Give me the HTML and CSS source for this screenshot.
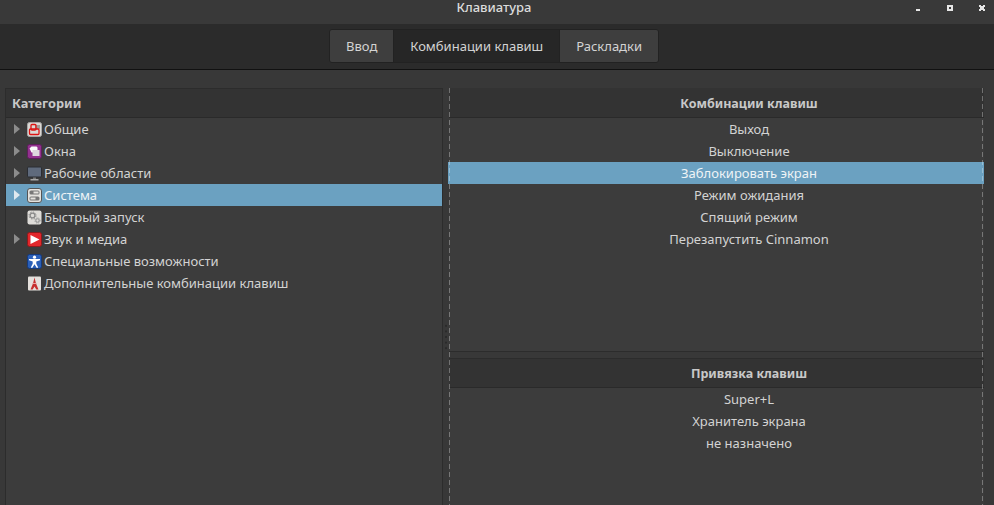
FILE: index.html
```html
<!DOCTYPE html>
<html lang="en">
<head>
    <meta charset="UTF-8">
    <meta name="viewport" content="width=device-width, initial-scale=1.0">
    <title>Клавиатура</title>
    <link rel="stylesheet" href="styles.css">
</head>
<body>
    <div class="titlebar">
        <span class="title">Клавиатура</span>
        <div class="window-buttons">
            <svg width="6" height="6" viewBox="0 0 6 6"><rect x="1" y="4" width="4" height="2" fill="#e6e6e6"/></svg>
            <svg width="6" height="6" viewBox="0 0 6 6"><path fill="#e6e6e6" fill-rule="evenodd" d="M0 0h6v6H0zM2 2v2h2V2z"/></svg>
            <svg width="6" height="6" viewBox="0 0 6 6"><path fill="#e6e6e6" d="M0 0h2v1h2V0h2v2H5v2h1v2H4V5H2v1H0V4h1V2H0z"/></svg>
        </div>
    </div>

    <div class="toolbar">
        <div class="tabs">
            <div class="tab">Ввод</div>
            <div class="tab active">Комбинации клавиш</div>
            <div class="tab">Раскладки</div>
        </div>
    </div>

    <div class="content">
        <div class="panel left-panel">
            <div class="panel-header left">Категории</div>
            <div class="rows">
                <div class="row"><span class="arrow"></span>
                    <svg class="icon" viewBox="0 0 15 15"><rect x=".5" y=".5" width="14" height="14" rx="2" fill="#dbd8d4" stroke="#a8a8a8"/><rect x="8" y="3" width="5" height="4" fill="#a09c98"/><rect x="4" y="2.500" width="5" height="5.500" rx="1" fill="none" stroke="#dc1414" stroke-width="1.300"/><rect x="2.500" y="7" width="9.500" height="5.500" rx="1" fill="none" stroke="#dc1414" stroke-width="1.300"/></svg>
                    Общие</div>
                <div class="row"><span class="arrow"></span>
                    <svg class="icon" viewBox="0 0 15 15"><rect x=".5" y=".5" width="14" height="14" rx="2" fill="#93318f" stroke="#5e1f5c"/><path d="M2.500 4.500l2-2h5l1 1v5h-6z" fill="#fafafa"/><rect x="5.500" y="6" width="7" height="6" fill="#ded8de"/></svg>
                    Окна</div>
                <div class="row"><span class="arrow"></span>
                    <svg class="icon" viewBox="0 0 15 15"><rect x=".5" y="1" width="14" height="10" rx="1" fill="#5f6a7c" stroke="#2a2d33"/><rect x="6" y="11.500" width="3" height="1.500" fill="#777"/><rect x="3.500" y="13" width="8" height="1.500" fill="#a8a8a8"/></svg>
                    Рабочие области</div>
                <div class="row selected"><span class="arrow"></span>
                    <svg class="icon" viewBox="0 0 15 15"><rect x=".5" y=".5" width="14" height="14" rx="2.500" fill="#e4e2de" stroke="#555"/><rect x="2.500" y="2.500" width="10" height="4" rx="1.500" fill="#777"/><rect x="6.500" y="3.500" width="5" height="2" fill="#e4e2de"/><rect x="2.500" y="8.500" width="10" height="4" rx="1.500" fill="#777"/><rect x="3.500" y="9.500" width="5" height="2" fill="#e4e2de"/></svg>
                    Система</div>
                <div class="row"><span class="arrow none"></span>
                    <svg class="icon" viewBox="0 0 15 15"><rect x=".5" y=".5" width="14" height="14" rx="2" fill="#dedcd8"/><circle cx="5.500" cy="5.500" r="2.400" fill="none" stroke="#8a8a8a" stroke-width="1.300"/><circle cx="5.500" cy="5.500" r="3.500" fill="none" stroke="#8a8a8a" stroke-dasharray="1.400 1.350"/><circle cx="10.500" cy="10.500" r="1.700" fill="none" stroke="#999" stroke-width="1.100"/><circle cx="10.500" cy="10.500" r="2.600" fill="none" stroke="#999" stroke-dasharray="1.100 1.060"/></svg>
                    Быстрый запуск</div>
                <div class="row"><span class="arrow"></span>
                    <svg class="icon" viewBox="0 0 15 15"><rect x=".5" y=".5" width="14" height="14" rx="2" fill="#e3272b" stroke="#8e1a1c"/><path d="M3.500 3l9 4.500-9 4.500z" fill="#fff"/></svg>
                    Звук и медиа</div>
                <div class="row"><span class="arrow none"></span>
                    <svg class="icon" viewBox="0 0 15 15"><rect x=".5" y=".5" width="14" height="14" rx="2" fill="#2a5fb8" stroke="#153a7c"/><circle cx="7.500" cy="3.200" r="1.600" fill="#fff"/><path d="M2 5h11v1.300L9.300 7.500v2.300l1.900 3.700-1.400.5-2.300-3.700-2.300 3.700-1.400-.5 1.900-3.700V7.500L2 6.300z" fill="#fff"/></svg>
                    Специальные возможности</div>
                <div class="row"><span class="arrow none"></span>
                    <svg class="icon" viewBox="0 0 15 15"><rect x="1" y=".5" width="13" height="14" rx="1" fill="#e4e0dc"/><path d="M7.500 1.500l1.500 6 2.500 6H9.300l-1.800-3-1.800 3H3.500l2.500-6z" fill="#c62e2e"/><rect x="5.500" y="7" width="4" height="1" fill="#e8a0a0"/></svg>
                    Дополнительные комбинации клавиш</div>
            </div>
        </div>

        <div class="grip"><div class="grip-dots"></div></div>

        <div class="right-side">
            <div class="panes">
                <div class="panel top-pane">
                    <div class="panel-header">Комбинации клавиш</div>
                    <div class="rows center">
                        <div class="row">Выход</div>
                        <div class="row">Выключение</div>
                        <div class="row selected">Заблокировать экран</div>
                        <div class="row">Режим ожидания</div>
                        <div class="row">Спящий режим</div>
                        <div class="row">Перезапустить Cinnamon</div>
                    </div>
                </div>
                <div class="panel bottom-pane">
                    <div class="panel-header">Привязка клавиш</div>
                    <div class="rows center">
                        <div class="row">Super+L</div>
                        <div class="row">Хранитель экрана</div>
                        <div class="row">не назначено</div>
                    </div>
                </div>
            </div>
        </div>
    </div>
</body>
</html>
```

FILE: styles.css
```css
* {
    box-sizing: border-box;
}

html, body {
    height: 100%;
}

body {
    margin: 0;
    overflow: hidden;
    display: flex;
    flex-direction: column;
    background-color: #383838;
    color: #d3d3d3;
    font-family: "Noto Sans", "Open Sans", sans-serif;
    font-size: 13px;
}

.titlebar {
    height: 24px;
    flex: none;
    display: flex;
    justify-content: center;
    position: relative;
    padding: 0 6px 0 0;
    background-color: #393939;
}

.title {
    font-weight: 500;
    line-height: 15px;
    color: #dcdcdc;
}

.window-buttons {
    position: absolute;
    top: 5px;
    right: 9px;
    display: flex;
    gap: 26px;
    align-items: flex-start;
}

.window-buttons svg {
    display: block;
}

.toolbar {
    height: 46px;
    flex: none;
    display: flex;
    justify-content: center;
    padding: 5px 6px 0 0;
    background-color: #2b2b2b;
    border-bottom: 1px solid #111;
}

.tabs {
    height: 34px;
    display: flex;
    border: 1px solid #222;
    border-radius: 3px;
    overflow: hidden;
}

.tab {
    display: flex;
    align-items: center;
    padding: 0 16px;
    background-color: #3e3e3e;
}

.tab.active {
    background-color: #262626;
    border-left: 1px solid #222;
    border-right: 1px solid #222;
}

.content {
    flex: 1;
    min-height: 0;
    display: flex;
    padding: 18px 10px 0 5px;
}

.panel {
    background-color: #3c3c3c;
}

.left-panel {
    width: 438px;
    flex: none;
    border: 1px solid #2c2c2c;
    border-bottom: none;
}

.grip {
    width: 5px;
    flex: none;
    padding: 235px 0 0 2px;
}

.grip-dots {
    width: 2px;
    height: 28px;
    background: radial-gradient(circle, #2a2a2a 1px, transparent 1.5px) center / 2px 5.6px repeat-y;
}

.panel-header {
    height: 30px;
    display: flex;
    align-items: center;
    justify-content: center;
    background-color: #333;
    border-bottom: 1px solid #2a2a2a;
    font-size: 12.5px;
    font-weight: 700;
    color: #c8c8c8;
}

.panel-header.left {
    height: 29px;
    justify-content: flex-start;
    padding-left: 6px;
    font-size: 12.8px;
}

.top-pane .panel-header {
    padding-top: 1px;
}

.row {
    height: 22px;
    display: flex;
    align-items: center;
    white-space: nowrap;
}

.rows.center .row {
    justify-content: center;
}

.row.selected {
    background-color: #6ba1c1;
    color: #eef3f6;
}

.rows.center .row.selected {
    margin-left: -1px;
    padding-left: 1px;
}

.arrow {
    width: 0;
    height: 0;
    margin: 0 7px 0 8px;
    border-left: 6px solid #8c8c8c;
    border-top: 5px solid transparent;
    border-bottom: 5px solid transparent;
}

.selected .arrow {
    border-left-color: #dfe9ef;
}

.arrow.none {
    border-left-color: transparent;
}

.icon {
    width: 15px;
    height: 15px;
    margin-right: 2px;
    flex: none;
}

/* the panes are wider than the window, so they get cut off on the right */
.right-side {
    flex: 1;
    min-width: 0;
    overflow: hidden;
    position: relative;
}

.right-side::before,
.right-side::after {
    content: "";
    position: absolute;
    top: 0;
    bottom: 0;
    width: 1px;
    background: repeating-linear-gradient(to bottom, rgba(255, 255, 255, 0.3) 0, rgba(255, 255, 255, 0.3) 5px, transparent 5px, transparent 8px);
}

.right-side::before {
    left: 1px;
}

.right-side::after {
    right: 1px;
}

.panes {
    width: 601px;
    height: 100%;
    padding-left: 1px;
    display: flex;
    flex-direction: column;
    gap: 6px;
}

.top-pane {
    height: 264px;
    flex: none;
    border-bottom: 1px solid #2c2c2c;
}

.bottom-pane {
    flex: 1;
}

.bottom-pane .panel-header {
    border-top: 1px solid #2c2c2c;
}
```
